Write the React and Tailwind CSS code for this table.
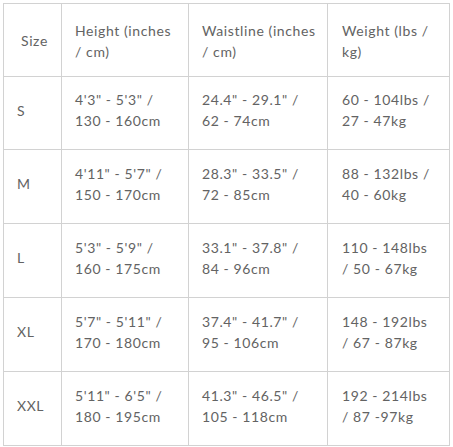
import React from "react";

const rows = [
  ["S", ["4'3\" - 5'3\" /", "130 - 160cm"], ["24.4\" - 29.1\" /", "62 - 74cm"], ["60 - 104lbs /", "27 - 47kg"], "h-[73px]"],
  ["M", ["4'11\" - 5'7\" /", "150 - 170cm"], ["28.3\" - 33.5\" /", "72 - 85cm"], ["88 - 132lbs /", "40 - 60kg"], "h-[74px]"],
  ["L", ["5'3\" - 5'9\" /", "160 - 175cm"], ["33.1\" - 37.8\" /", "84 - 96cm"], ["110 - 148lbs", "/ 50 - 67kg"], "h-[74px]"],
  ["XL", ["5'7\" - 5'11\" /", "170 - 180cm"], ["37.4\" - 41.7\" /", "95 - 106cm"], ["148 - 192lbs", "/ 67 - 87kg"], "h-[74px]"],
  ["XXL", ["5'11\" - 6'5\" /", "180 - 195cm"], ["41.3\" - 46.5\" /", "105 - 118cm"], ["192 - 214lbs", "/ 87 -97kg"], "h-[74px]"],
];

function Cell({ children, className = "" }) {
  return (
    <div className={`flex flex-col justify-center border-r border-b border-[#d2d2d2] ${className}`}>
      {children}
    </div>
  );
}

function Two({ lines }) {
  return (
    <>
      <span>{lines[0]}</span>
      <span>{lines[1]}</span>
    </>
  );
}

export default function App() {
  return (
    <div className="bg-white w-[453px] h-[447px] pt-[3px] pl-[3px]" style={{ fontFamily: "Lato, 'Liberation Sans', sans-serif" }}>
      <div className="grid grid-cols-[58px_127px_139px_122px] w-[447px] border-l border-t border-[#d2d2d2] text-[14px] leading-[21px] tracking-[0.6px] text-[#636363]">
        <Cell className="h-[73px] pl-[17px] pt-[1px]">Size</Cell>
        <Cell className="h-[73px] pl-[13px] pt-[1px]"><Two lines={["Height (inches", "/ cm)"]} /></Cell>
        <Cell className="h-[73px] pl-[13px] pt-[1px]"><Two lines={["Waistline (inches", "/ cm)"]} /></Cell>
        <Cell className="h-[73px] pl-[14px] pt-[1px]"><Two lines={["Weight (lbs /", "kg)"]} /></Cell>
        {rows.map((r) => (
          <React.Fragment key={r[0]}>
            <Cell className={`${r[4]} pl-[13px] pb-[6px]`}>{r[0]}</Cell>
            <Cell className={`${r[4]} pl-[13px] pb-[6px]`}><Two lines={r[1]} /></Cell>
            <Cell className={`${r[4]} pl-[13px] pb-[6px]`}><Two lines={r[2]} /></Cell>
            <Cell className={`${r[4]} pl-[14px] pb-[6px]`}><Two lines={r[3]} /></Cell>
          </React.Fragment>
        ))}
      </div>
    </div>
  );
}
